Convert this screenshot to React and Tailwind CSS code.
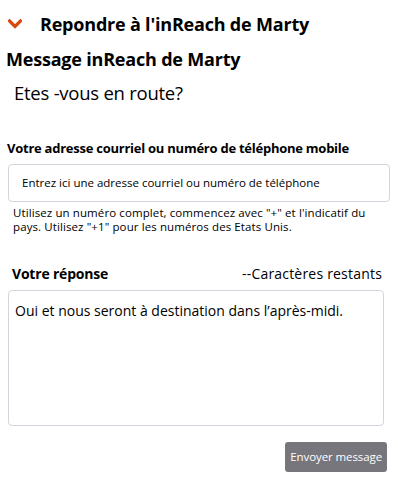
import React from 'react'

const Chevron = () => (
  <svg width="14" height="10" viewBox="0 0 14 10" className="shrink-0">
    <path d="M1.5 2 L7 7.5 L12.5 2" fill="none" stroke="#d9480f" strokeWidth="3.2" strokeLinecap="square" />
  </svg>
)

const App = () => {
  return (
    <div className="w-[398px] h-[484px] bg-white text-black font-['Open_Sans',sans-serif] overflow-hidden">
      {/* Header */}
      <div className="flex items-center pl-2 pt-[7px] h-[40px]">
        <Chevron />
        <h2 className="ml-[18px] text-[18px] font-bold leading-6 tracking-[-0.2px]">Repondre à l'inReach de Marty</h2>
      </div>

      <h3 className="pl-[6px] mt-[7px] text-[18px] font-bold leading-6 tracking-[-0.2px]">Message inReach de Marty</h3>
      <p className="pl-[14px] mt-[10px] text-[18.5px] leading-6 tracking-[-0.25px]">Etes -vous en route?</p>

      <div className="mt-[33px] px-2">
        <label className="block -ml-[1px] text-[13px] font-bold leading-5 tracking-[-0.25px]">
          Votre adresse courriel ou numéro de téléphone mobile
        </label>
        <div className="mt-[6px] h-[38px] rounded-[4px] border border-gray-300 flex items-center pl-[13px] text-[11.5px]">
          Entrez ici une adresse courriel ou numéro de téléphone
        </div>
        <p className="mt-[4px] pl-[5px] pr-[10px] text-[11.5px] leading-[14px] tracking-[0.1px]">
          Utilisez un numéro complet, commencez avec "+" et l'indicatif du pays. Utilisez "+1" pour les numéros des Etats Unis.
        </p>
      </div>

      <div className="mt-[30px] px-2 flex items-end justify-between pr-[16px]">
        <span className="pl-1 text-[14px] font-bold leading-5 tracking-[-0.2px]">Votre réponse</span>
        <span className="text-[14px] leading-5 tracking-[0.2px]">--Caractères restants</span>
      </div>

      <div className="mx-2 mt-[6px] w-[376px] h-[136px] rounded-[4px] border border-gray-300 px-[6px] pt-[9px] text-[14px]">
        Oui et nous seront à destination dans l’après-midi.
      </div>

      <div className="flex justify-end pr-[11px] mt-[16px]">
        <button className="h-[30px] px-[5px] rounded-[3px] bg-[#77767c] text-white text-[11.5px] tracking-[-0.1px]">
          Envoyer message
        </button>
      </div>
    </div>
  )
}

export default App
